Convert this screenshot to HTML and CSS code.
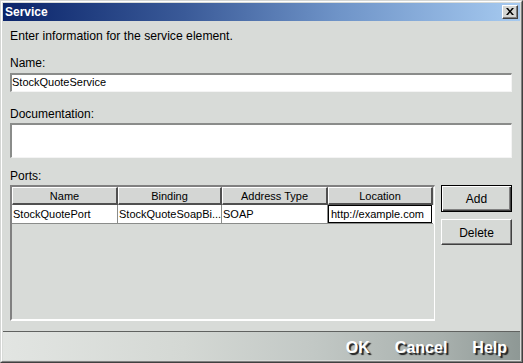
FILE: index.html
```html
<!DOCTYPE html>
<html>
<head>
<meta charset="utf-8">
<link rel="stylesheet" href="styles.css">
</head>
<body>
<div class="window">
  <div class="frame">
    <div class="titlebar">
      <span class="title">Service</span>
      <span class="close">
        <svg width="8" height="7" viewBox="0 0 8 7"><path d="M0 0h2l2 2.5L6 0h2L5 3.5 8 7H6L4 4.5 2 7H0l3-3.5z" fill="#000"/></svg>
      </span>
    </div>
    <div class="content">
      <div class="intro">Enter information for the service element.</div>
      <div class="label label-name">Name:</div>
      <div class="field field-name">StockQuoteService</div>
      <div class="label label-doc">Documentation:</div>
      <div class="field field-doc"></div>
      <div class="label label-ports">Ports:</div>
      <div class="ports">
        <div class="table">
          <div class="thead">
            <div class="th">Name</div>
            <div class="th">Binding</div>
            <div class="th">Address Type</div>
            <div class="th">Location</div>
          </div>
          <div class="row">
            <div class="td">StockQuotePort</div>
            <div class="td">StockQuoteSoapBi...</div>
            <div class="td">SOAP</div>
            <div class="td td-edit"><span class="editor">http://example.com</span></div>
          </div>
        </div>
        <div class="side">
          <div class="btn btn-default"><span class="btn-inner">Add</span></div>
          <div class="btn"><span class="btn-inner">Delete</span></div>
        </div>
      </div>
    </div>
    <div class="bottombar">
      <span class="act">OK</span>
      <span class="act">Cancel</span>
      <span class="act">Help</span>
    </div>
  </div>
</div>
</body>
</html>
```

FILE: styles.css
```css
html, body {
  margin: 0;
  padding: 0;
  background: #d8dbd8;
}
.window {
  width: 523px;
  height: 363px;
  box-sizing: border-box;
  border: 1px solid;
  border-color: #d4d6d4 #404040 #404040 #d4d6d4;
  font-family: "Liberation Sans", Arial, sans-serif;
  color: #000;
}
.frame {
  height: 100%;
  box-sizing: border-box;
  border: 1px solid;
  border-color: #ffffff #808080 #808080 #ffffff;
  padding: 1px;
  display: flex;
  flex-direction: column;
  background: #d8dbd8;
}
.titlebar {
  height: 18px;
  flex: none;
  display: flex;
  align-items: center;
  justify-content: space-between;
  background: linear-gradient(to right, #0a246a 0%, #3a5a98 35%, #6f94c8 65%, #a6caf0 100%);
}
.title {
  color: #fff;
  font-weight: bold;
  font-size: 12px;
  line-height: 18px;
  padding-left: 2px;
}
.close {
  width: 16px;
  height: 14px;
  box-sizing: border-box;
  margin-right: 2px;
  background: #d4d6d4;
  border: 1px solid;
  border-color: #ffffff #404040 #404040 #ffffff;
  box-shadow: inset -1px -1px 0 #808080;
  display: flex;
  align-items: center;
  justify-content: center;
}
.close svg { display: block; margin-top: -1px; margin-left: -1px; }
.content {
  flex: 1;
  display: flex;
  flex-direction: column;
  padding: 8px 8px 0 7px;
}
.intro, .label {
  font-size: 12px;
  line-height: 14px;
  height: 14px;
}
.intro { font-size: 12.2px; }
.label-name { margin-top: 13px; }
.label-doc { margin-top: 15px; }
.label-ports { margin-top: 11px; }
.field {
  box-sizing: border-box;
  background: #fff;
  border-style: solid;
  border-width: 2px 1px 1px 2px;
  border-color: #8a8c8a #f4f4f4 #f4f4f4 #8a8c8a;
  font-size: 11px;
  padding-left: 0;
}
.field-name {
  margin-top: 3px;
  height: 19px;
  line-height: 15px;
}
.field-doc {
  margin-top: 2px;
  height: 35px;
}
.ports {
  margin-top: 2px;
  display: flex;
  gap: 6px;
}
.table {
  width: 425px;
  height: 136px;
  box-sizing: border-box;
  border-style: solid;
  border-width: 2px 1px 2px 2px;
  border-color: #808080 #ffffff #ffffff #808080;
}
.thead, .row {
  display: grid;
  grid-template-columns: 106px 104px 106px 105px;
}
.th {
  height: 18px;
  box-sizing: border-box;
  background: #d4d6d4;
  border-style: solid;
  border-width: 1px 2px 2px 1px;
  border-color: #ffffff #505050 #505050 #ffffff;
  font-size: 11px;
  line-height: 16px;
  text-align: center;
  white-space: nowrap;
  overflow: hidden;
}
.row { background: #fff; }
.td {
  height: 19px;
  box-sizing: border-box;
  border-right: 1px solid #8a8c8a;
  border-bottom: 1px solid #8a8c8a;
  font-size: 11px;
  line-height: 18px;
  padding-left: 1px;
  white-space: nowrap;
  overflow: hidden;
}
.td-edit {
  padding: 0;
  border-right: none;
}
.editor {
  display: block;
  height: 18px;
  box-sizing: border-box;
  border: 1px solid #000;
  padding-left: 2px;
  line-height: 16px;
  margin-right: 1px;
  background: #fff;
}
.side {
  display: flex;
  flex-direction: column;
  gap: 7px;
}
.btn {
  width: 71px;
  height: 26px;
  box-sizing: border-box;
  background: #d6d9d6;
  border-style: solid;
  border-width: 1px;
  border-color: #ffffff #404040 #404040 #ffffff;
  box-shadow: inset -1px -1px 0 #808080;
  display: flex;
  align-items: center;
  justify-content: center;
  font-size: 12px;
}
.btn-default {
  height: 27px;
  border: 1px solid #000;
  box-shadow: inset 1px 1px 0 #fff, inset -1px -1px 0 #404040, inset -2px -2px 0 #808080;
}
.btn-inner { padding-top: 1px; }
.bottombar {
  height: 29px;
  flex: none;
  box-sizing: border-box;
  border-top: 1px solid #606260;
  background: linear-gradient(to right, #e2e5e2 0%, #d4d8d4 35%, #c2c8c5 60%, #a8b0ad 85%, #8e9895 100%);
  display: flex;
  align-items: center;
  justify-content: flex-end;
  padding-right: 13px;
  gap: 25px;
}
.act {
  color: #fff;
  font-size: 16px;
  font-weight: bold;
  line-height: 18px;
  padding-top: 3px;
  text-shadow: 2px 2px 1px #202020;
}
```
